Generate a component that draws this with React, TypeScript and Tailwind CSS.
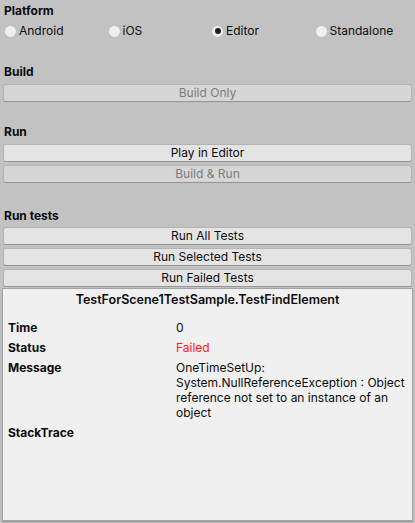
import React from 'react'

const platforms = ['Android', 'iOS', 'Editor', 'Standalone']

function Radio({ label, checked }: { label: string; checked?: boolean }) {
  return (
    <div className="flex items-center">
      <span className="w-[13px] h-[13px] rounded-full bg-[#efefef] border border-[#bdbdbd] flex items-center justify-center">
        {checked && <span className="w-[6px] h-[6px] rounded-full bg-[#222]" />}
      </span>
      <span className="ml-[2px] text-[#0c0c0c]">{label}</span>
    </div>
  )
}

function Btn({ label, disabled }: { label: string; disabled?: boolean }) {
  return (
    <div
      className={
        'mx-[3px] h-[18px] rounded-[3px] border border-[#b4b4b4] border-b-[#949494] flex items-center justify-center ' +
        (disabled ? 'bg-[#d6d6d6] text-[#7c7c7c]' : 'bg-[#e4e4e4] text-[#0c0c0c]')
      }
    >
      {label}
    </div>
  )
}

function Label({ text, className }: { text: string; className?: string }) {
  return <div className={'h-[20px] flex items-center px-[4px] font-bold text-[#0c0c0c] ' + (className || '')}>{text}</div>
}

export default function App() {
  return (
    <div
      className="w-[415px] h-[523px] bg-[#c2c2c2] text-[12px] overflow-hidden flex flex-col pt-[1px]"
      style={{ fontFamily: 'Inter, "Noto Sans", sans-serif' }}
    >
      <Label text="Platform" />
      <div className="grid grid-cols-4 pl-[4px] h-[20px] w-[418px]">
        {platforms.map(p => (
          <Radio key={p} label={p} checked={p === 'Editor'} />
        ))}
      </div>

      <Label text="Build" className="mt-[21px]" />
      <div className="mt-[2px]">
        <Btn label="Build Only" disabled />
      </div>

      <Label text="Run" className="mt-[20px]" />
      <div className="mt-[2px] flex flex-col gap-[3px]">
        <Btn label="Play in Editor" />
        <Btn label="Build & Run" disabled />
      </div>

      <Label text="Run tests" className="mt-[23px]" />
      <div className="mt-[1px] flex flex-col gap-[3px]">
        <Btn label="Run All Tests" />
        <Btn label="Run Selected Tests" />
        <Btn label="Run Failed Tests" />
      </div>

      <div className="mt-[1px] mx-[2px] flex-1 mb-[2px] bg-[#f0f0f0] border border-[#a3a3a3] shadow-[0_1px_1px_rgba(0,0,0,0.2)]">
        <div className="h-[22px] flex items-center justify-center font-semibold text-[12.5px] text-[#0c0c0c]">
          TestForScene1TestSample.TestFindElement
        </div>
        <div className="mt-[9px] pl-[5px] pr-[2px] grid grid-cols-[168px_1fr] gap-y-[5px] text-[#0c0c0c] leading-[15px]">
          <div className="font-bold">Time</div>
          <div>0</div>
          <div className="font-bold">Status</div>
          <div className="text-[#ff1a1a]">Failed</div>
          <div className="font-bold">Message</div>
          <div>
            OneTimeSetUp:
            <br />
            System.NullReferenceException : Object reference not set to an instance of an object
          </div>
          <div className="font-bold">StackTrace</div>
          <div />
        </div>
      </div>
    </div>
  )
}
